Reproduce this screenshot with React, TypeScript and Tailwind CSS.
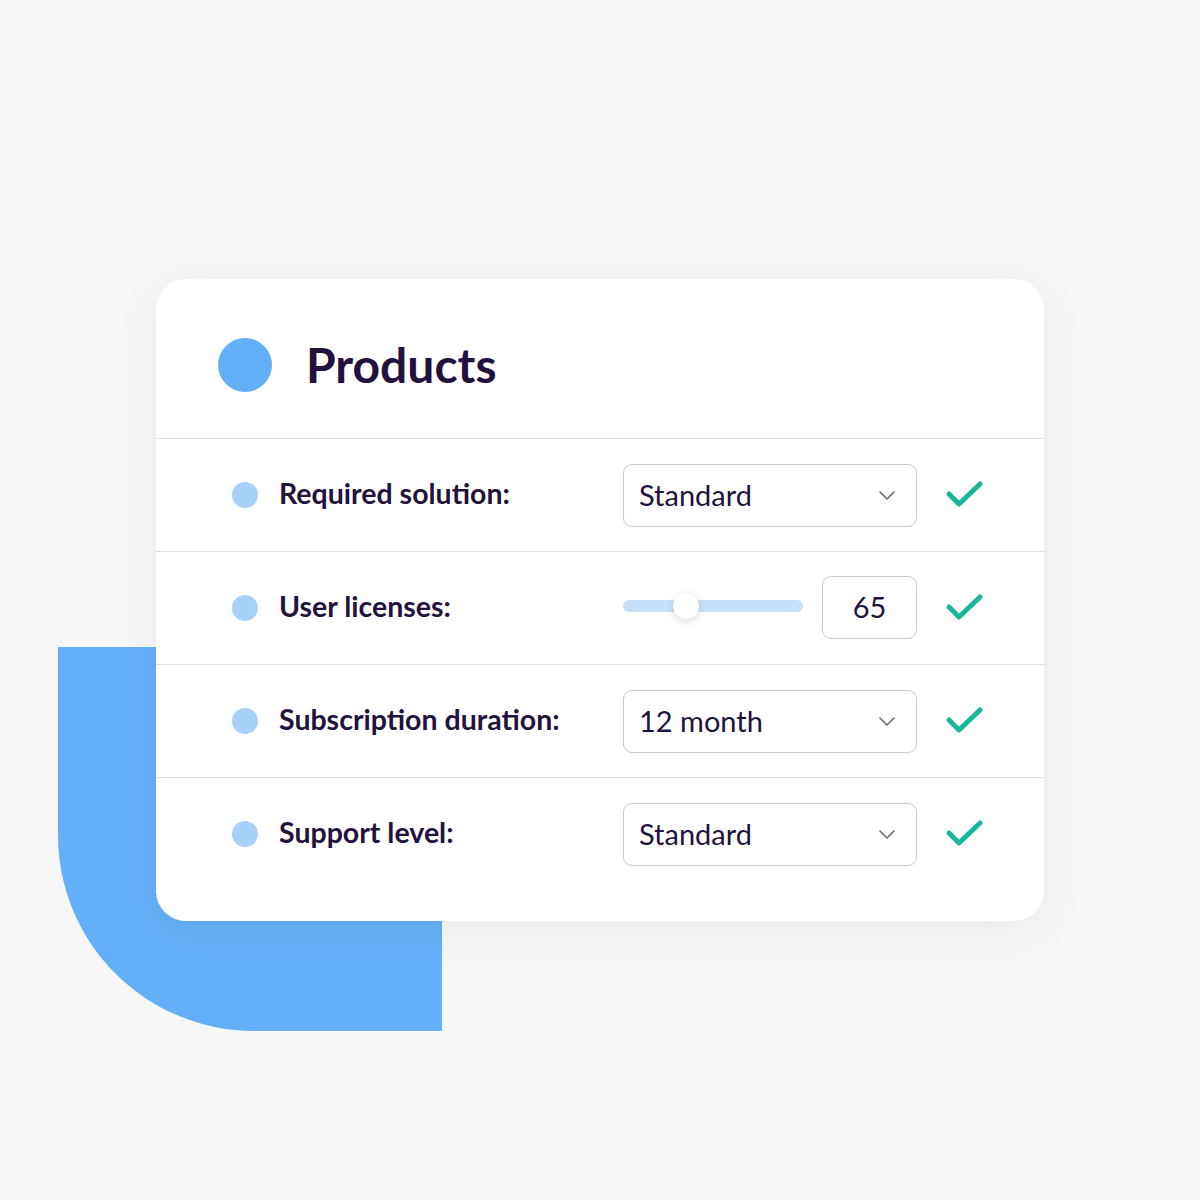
import React from "react";

const Check = () => (
  <svg width="40" height="32" viewBox="0 0 40 32" className="shrink-0">
    <polyline points="4,15 14,25 35,5" fill="none" stroke="#16b899" strokeWidth="5" strokeLinecap="round" strokeLinejoin="round" />
  </svg>
);

const Chevron = () => (
  <svg width="18" height="12" viewBox="0 0 18 12">
    <polyline points="2,3 9,10 16,3" fill="none" stroke="#6b6b6b" strokeWidth="1.6" strokeLinecap="round" strokeLinejoin="round" />
  </svg>
);

const Select = ({ value }: { value: string }) => (
  <div className="w-[294px] h-[63px] rounded-[9px] border border-[#c9c9c9] flex items-center justify-between pl-[15px] pr-[20px]">
    <span className="text-[29px] text-[#22123c] leading-none -translate-y-[1px]">{value}</span>
    <Chevron />
  </div>
);

const Row = ({ label, children }: { label: string; children: React.ReactNode }) => (
  <div className="flex items-center h-[113px] border-t border-[#dedede] pl-[76px]">
    <div className="w-[391px] flex items-center shrink-0">
      <div className="w-[26px] h-[26px] rounded-full bg-[#a7d0fb] shrink-0" />
      <span className="ml-[21px] text-[28.5px] font-bold text-[#22123c] leading-none -translate-y-[2px]">{label}</span>
    </div>
    <div className="flex items-center">
      {children}
      <div className="ml-[28px]">
        <Check />
      </div>
    </div>
  </div>
);

export default function App() {
  return (
    <div className="w-[1200px] h-[1200px] bg-[#f7f7f7] relative overflow-hidden" style={{ fontFamily: "Lato, 'Noto Sans', sans-serif" }}>
      <div className="absolute left-[58px] top-[647px] w-[384px] h-[384px] bg-[#64b0f8] rounded-bl-[196px]" />
      <div className="relative pt-[279px] pl-[156px]">
        <div className="w-[888px] h-[642px] bg-white rounded-[30px] shadow-[0_10px_50px_rgba(0,0,0,0.06)] flex flex-col">
          <div className="h-[159px] flex items-start pt-[59px] pl-[62px]">
            <div className="w-[54px] h-[54px] rounded-full bg-[#64b0f8] shrink-0" />
            <span className="ml-[34px] text-[48px] font-bold text-[#22103d] leading-[54px]">Products</span>
          </div>
          <Row label="Required solution:">
            <Select value="Standard" />
          </Row>
          <Row label="User licenses:">
            <div className="w-[294px] flex items-center justify-between -translate-y-[1px]">
              <div className="relative w-[180px] h-[12px] rounded-full bg-[#c6e1f9] -translate-y-[1px]">
                <div className="absolute left-[50px] top-[-7px] w-[26px] h-[26px] rounded-full bg-white shadow-[0_2px_8px_rgba(0,0,0,0.15)]" />
              </div>
              <div className="w-[95px] h-[63px] rounded-[9px] border border-[#c9c9c9] flex items-center justify-center">
                <span className="text-[29px] text-[#22123c] leading-none -translate-y-[1px]">65</span>
              </div>
            </div>
          </Row>
          <Row label="Subscription duration:">
            <Select value="12 month" />
          </Row>
          <Row label="Support level:">
            <Select value="Standard" />
          </Row>
        </div>
      </div>
    </div>
  );
}
